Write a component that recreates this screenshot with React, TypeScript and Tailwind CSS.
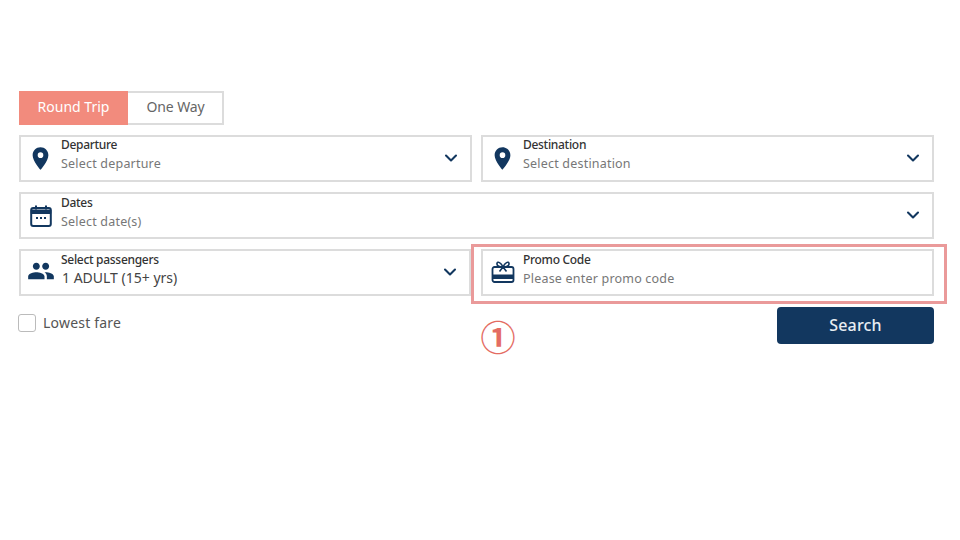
import { ChevronDown } from "lucide-react"
import type { ReactNode } from "react"

const navy = "#12375f"

function Pin() {
  return (
    <svg viewBox="0 0 24 24" className="w-[27px] h-[27px] -ml-[2px]" fill={navy}>
      <path d="M12 2C8.13 2 5 5.13 5 9c0 5.25 7 13 7 13s7-7.75 7-13c0-3.87-3.13-7-7-7zm0 9.5a2.5 2.5 0 0 1 0-5 2.500 2.500 0 0 1 0 5z" />
    </svg>
  )
}

function Calendar() {
  return (
    <svg viewBox="0 0 24 24" className="w-[24px] h-[24px]" fill="none" stroke={navy}>
      <rect x="2.2" y="4" width="19.6" height="18" rx="2" strokeWidth="2" />
      <path d="M2.2 6h19.6v3.5H2.2z" fill={navy} strokeWidth="1" />
      <path d="M7 1.500v4M17 1.500v4" strokeWidth="2" />
      <path d="M7 14h2M11 14h2M15 14h2" strokeWidth="1.800" />
    </svg>
  )
}

function People() {
  return (
    <svg viewBox="0 0 24 24" className="w-[28px] h-[28px] -mt-[3px]" fill={navy}>
      <path d="M16 11c1.66 0 2.99-1.34 2.99-3S17.66 5 16 5s-3 1.34-3 3 1.34 3 3 3zm-8 0c1.66 0 2.99-1.34 2.99-3S9.66 5 8 5 5 6.34 5 8s1.34 3 3 3zm0 2c-2.33 0-7 1.17-7 3.500V19h14v-2.500C15 14.170 10.330 13 8 13zm8 0c-.29 0-.62.02-.97.05 1.160.84 1.970 1.970 1.970 3.450V19h6v-2.500c0-2.330-4.670-3.500-7-3.500z" />
    </svg>
  )
}

function Gift() {
  return (
    <svg viewBox="0 0 24 24" className="w-[24px] h-[24px] -mt-[2px] -ml-[1px]" fill="none" stroke={navy} strokeWidth="1.800">
      <rect x="1.500" y="7" width="21" height="15" rx="2" />
      <path d="M1.500 15h21v3.500h-21z" fill={navy} strokeWidth="1" />
      <path d="M12 7C10 2.500 6.500 1 6 3.500S9 7 12 7zm0 0c2-4.500 5.500-6 6-3.500S15 7 12 7zM12 7 8.500 11.500M12 7l3.500 4.500" strokeWidth="1.600" />
    </svg>
  )
}

function Field({ icon, label, value, valueClass, arrow = true, className, textClass }: { icon: ReactNode; label: string; value: string; valueClass?: string; arrow?: boolean; className?: string; textClass: string }) {
  return (
    <div className={`h-[47px] flex items-center border-2 border-[#dcdcdc] bg-white ${className ?? ""}`}>
      <div className="w-[40px] flex justify-center shrink-0">{icon}</div>
      <div className={`flex-1 min-w-0 ${textClass}`}>
        <div className="text-[12px] leading-[17px] font-medium text-[#333] tracking-[-0.3px]">{label}</div>
        <div className={valueClass ?? "text-[12.5px] leading-[21px] text-[#777] tracking-[0.2px]"}>{value}</div>
      </div>
      {arrow && <ChevronDown className="w-[20px] h-[20px] mr-[9px] -mt-[1px]" color={navy} strokeWidth={2.5} />}
    </div>
  )
}

export default function App() {
  return (
    <div className="w-[960px] h-[540px] bg-white overflow-hidden pt-[91px] pl-[19px] font-['Noto_Sans',sans-serif]">
      <div className="w-[915px] flex flex-col">
        {/* Trip type */}
        <div className="flex h-[34px] w-[205px] border-2 border-[#dcdcdc] text-[14px]">
          <div className="w-[109px] -my-[2px] -ml-[2px] pb-[3px] bg-[#f28b7d] text-white flex items-center justify-center">Round Trip</div>
          <div className="flex-1 pb-[3px] pl-[1px] text-[#666] tracking-[-0.1px] flex items-center justify-center">One Way</div>
        </div>

        <div className="flex gap-[9px] mt-[10px]">
          <Field className="w-[453px]" textClass="pb-[7px]" icon={<Pin />} label="Departure" value="Select departure" />
          <Field className="w-[453px]" textClass="pb-[7px]" icon={<Pin />} label="Destination" value="Select destination" />
        </div>

        <Field className="mt-[10px]" textClass="pb-[5px]" icon={<Calendar />} label="Dates" value="Select date(s)" />

        <div className="flex gap-[10px] mt-[10px]">
          <Field className="w-[452px]" textClass="pb-[6px]" icon={<People />} label="Select passengers" value="1 ADULT (15+ yrs)" valueClass="text-[14px] leading-[20px] text-[#444] pl-[1px]" />
          <div className="relative w-[453px]">
            <Field textClass="pb-[6px]" icon={<Gift />} label="Promo Code" value="Please enter promo code" arrow={false} />
            <div className="absolute -left-[10px] -top-[5px] w-[476px] h-[60px] border-[3px] border-[#ea9a9a] pointer-events-none" />
            <div className="absolute left-[-2px] top-[65px] w-[38px] text-center text-[35px] leading-[44px] font-bold text-[#e46c62] font-['Noto_Sans_CJK_JP',sans-serif]">①</div>
          </div>
        </div>

        <div className="flex items-start justify-between mt-[11px]">
          <label className="flex items-center gap-[7px] -ml-[1px] mt-[7px]">
            <span className="w-[18px] h-[18px] rounded-[3px] border border-[#bbb] bg-white" />
            <span className="text-[14px] leading-[16px] -mt-[1px] text-[#555] tracking-[0.2px]">Lowest fare</span>
          </label>
          <button className="w-[157px] h-[37px] pb-[2px] rounded-[4px] bg-[#12375f] text-[#e8edf2] text-[16px] font-medium tracking-[0.2px]">Search</button>
        </div>
      </div>
    </div>
  )
}
